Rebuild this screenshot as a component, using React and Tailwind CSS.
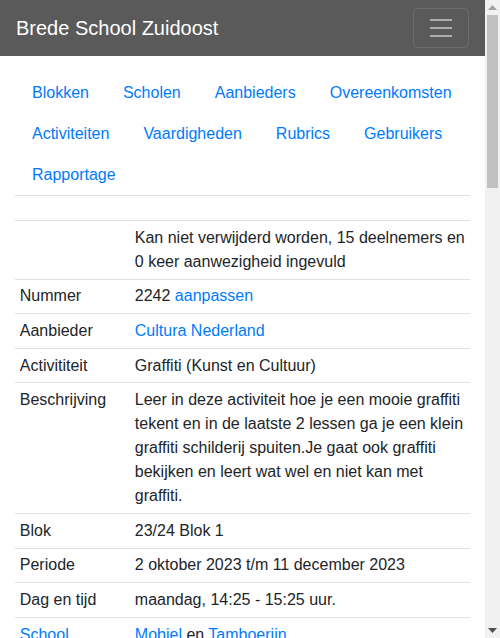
import React from "react";

const links = [
  "Blokken",
  "Scholen",
  "Aanbieders",
  "Overeenkomsten",
  "Activiteiten",
  "Vaardigheden",
  "Rubrics",
  "Gebruikers",
  "Rapportage",
];

const Link = ({ children }) => <a className="text-[#007bff]">{children}</a>;

const rows = [
  {
    label: "",
    value: "Kan niet verwijderd worden, 15 deelnemers en 0 keer aanwezigheid ingevuld",
  },
  {
    label: "Nummer",
    value: (
      <>
        2242 <Link>aanpassen</Link>
      </>
    ),
  },
  { label: "Aanbieder", value: <Link>Cultura Nederland</Link> },
  { label: "Activititeit", value: "Graffiti (Kunst en Cultuur)" },
  {
    label: "Beschrijving",
    value:
      "Leer in deze activiteit hoe je een mooie graffiti tekent en in de laatste 2 lessen ga je een klein graffiti schilderij spuiten.Je gaat ook graffiti bekijken en leert wat wel en niet kan met graffiti.",
  },
  { label: "Blok", value: "23/24 Blok 1" },
  { label: "Periode", value: "2 oktober 2023 t/m 11 december 2023" },
  { label: "Dag en tijd", value: "maandag, 14:25 - 15:25 uur." },
  {
    label: <Link>School</Link>,
    value: (
      <>
        <Link>Mobiel</Link> en <Link>Tamboerijn</Link>
      </>
    ),
  },
  { label: "Locatie", value: "Mobiel" },
  { label: "Groepen", value: "5, 6, 7 en 8" },
];

// fake browser scrollbar on the right
const Scrollbar = () => (
  <div className="w-[15px] shrink-0 h-full bg-[#f1f1f1] flex flex-col">
    <div className="h-[15px] flex items-center justify-center">
      <svg width="9" height="5" viewBox="0 0 9 5">
        <path d="M0 5L4.5 0L9 5Z" fill="#a3a3a3" />
      </svg>
    </div>
    <div className="h-[173px] mx-[2px] bg-[#c1c1c1]" />
    <div className="flex-1" />
    <div className="h-[15px] flex items-center justify-center">
      <svg width="9" height="5" viewBox="0 0 9 5">
        <path d="M0 0L9 0L4.5 5Z" fill="#505050" />
      </svg>
    </div>
  </div>
);

export default function App() {
  return (
    <div className="h-[638px] flex overflow-hidden bg-white text-[#212529] text-base leading-6 font-['Liberation_Sans',Arial,sans-serif]">
      <div className="w-[485px] shrink-0 overflow-hidden">
        {/* navbar */}
        <nav className="h-14 bg-[#5a5a5a] flex items-center px-4">
          <span className="text-white text-xl leading-[30px]">Brede School Zuidoost</span>
          <button className="ml-auto w-14 h-10 border border-white/10 rounded flex items-center justify-center">
            <svg width="30" height="30" viewBox="0 0 30 30">
              <path
                d="M4 7h22M4 15h22M4 23h22"
                stroke="rgba(255,255,255,0.5)"
                strokeWidth="2"
              />
            </svg>
          </button>
        </nav>

        <div className="px-[15px] pt-4">
          <ul className="flex flex-wrap border-b border-[#dee2e6]">
            {links.map((l) => (
              <li key={l}>
                <a className="block px-[17px] py-2 leading-[25px] text-[#007bff]">{l}</a>
              </li>
            ))}
          </ul>

          <table className="w-full mt-6 border-collapse border-b border-[#dee2e6]">
            <tbody>
              {rows.map((r, i) => (
                <tr key={i} className="border-t border-[#dee2e6] align-top">
                  <td className="w-[115px] p-[4.8px]">{r.label}</td>
                  <td className="p-[4.8px]">{r.value}</td>
                </tr>
              ))}
            </tbody>
          </table>
        </div>
      </div>
      <Scrollbar />
    </div>
  );
}
